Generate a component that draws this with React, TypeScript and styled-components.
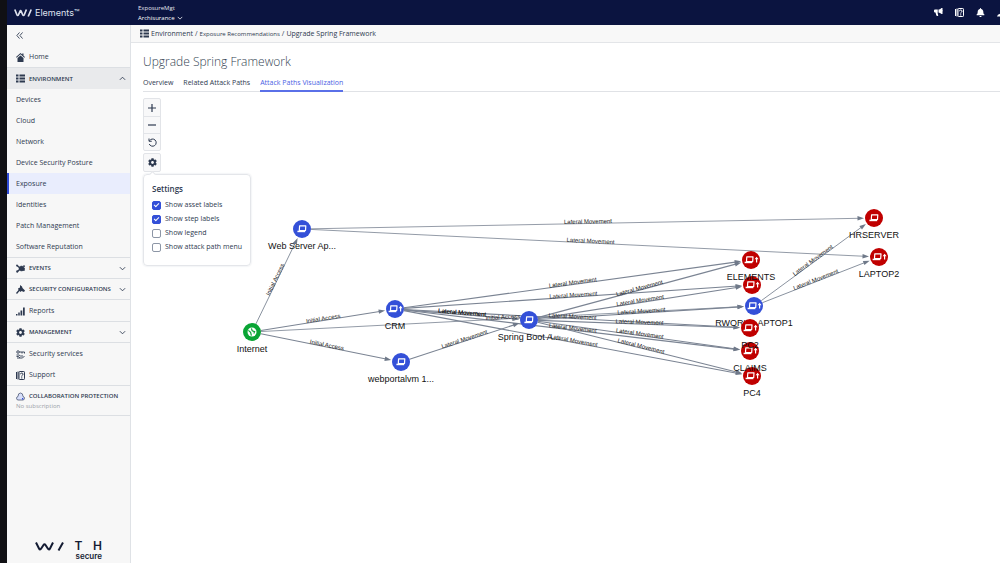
import React, { useState } from "react";
import styled, { createGlobalStyle } from "styled-components";
import { FaBell, FaCog } from "react-icons/fa";

const GlobalStyle = createGlobalStyle`
  *, *::before, *::after { box-sizing: border-box; }
  body {
    margin: 0;
    background: #101014;
    color: #2e3a50;
    font-family: "Open Sans", "Noto Sans", sans-serif;
    font-size: 7px;
    line-height: 10px;
  }
  button, input { font: inherit; color: inherit; margin: 0; }
  a { color: inherit; text-decoration: none; }
  svg { display: block; flex: none; }
`;

const Shell = styled.div`
  display: flex;
  flex-direction: column;
  min-height: 100vh;
  padding-left: 7px;
`;

const TopBar = styled.header`
  display: flex;
  align-items: center;
  height: 25px;
  flex: none;
  background: #0b1440;
  color: #ffffff;
`;

const Brand = styled.a`
  display: flex;
  align-items: center;
  gap: 3px;
  width: 131px;
  padding-left: 7px;
  font-family: Inter, sans-serif;
  font-size: 9px;
  color: #dfe2ee;
`;

const Account = styled.div`
  display: flex;
  flex-direction: column;
  padding-top: 1px;
  color: #e3e5ef;
  font-size: 6px;
`;

const AccountSwitch = styled.button`
  display: flex;
  align-items: center;
  gap: 2px;
  padding: 0;
  border: 0;
  background: none;
  color: #ffffff;
  font-weight: 500;
`;

const TopActions = styled.div`
  display: flex;
  align-items: center;
  gap: 12px;
  margin-left: auto;
`;

const IconButton = styled.button`
  display: flex;
  padding: 0;
  border: 0;
  background: none;
  color: #ffffff;
`;

const EdgeSlot = styled.span`
  width: 3px;
  overflow: hidden;
`;

const Body = styled.div`
  display: flex;
  flex: 1;
`;

const Sidebar = styled.nav`
  display: flex;
  flex-direction: column;
  width: 124px;
  flex: none;
  background: #f7f7f7;
  border-right: 1px solid #dfe2e6;
`;

const Collapse = styled.button`
  display: flex;
  align-items: center;
  height: 21px;
  padding: 0 9px;
  border: 0;
  background: none;
`;

const Group = styled.div`
  display: flex;
  flex-direction: column;
  border-bottom: 1px solid #dcdfe3;
`;

const NavLink = styled.a<{ $active?: boolean }>`
  display: flex;
  align-items: center;
  gap: 4px;
  height: 21px;
  padding: 1px 7px 0;
  border-left: 2px solid ${(p) => (p.$active ? "#2f4bd6" : "transparent")};
  background: ${(p) => (p.$active ? "#e9edfd" : "transparent")};
`;

const SectionButton = styled.button<{ $open?: boolean }>`
  display: flex;
  align-items: center;
  gap: 4px;
  height: ${(p) => (p.$open ? 21 : 20)}px;
  padding: 0 4px 0 9px;
  border: 0;
  background: ${(p) => (p.$open ? "#e9eaec" : "transparent")};
  font-size: 6px;
  font-weight: 600;
  text-align: left;
`;

const SectionLabel = styled.span`
  flex: 1;
  white-space: nowrap;
`;

const Collaboration = styled.div`
  display: flex;
  flex-direction: column;
  height: 30px;
  padding: 5px 0 0 9px;
  border-bottom: 1px solid #dcdfe3;
  color: #9a9fa8;
  font-size: 6px;
`;

const CollaborationTitle = styled.div`
  display: flex;
  align-items: center;
  gap: 4px;
  color: #2e3a50;
  font-weight: 600;
  white-space: nowrap;
`;

const FooterLogo = styled.div`
  display: flex;
  flex-direction: column;
  width: 67px;
  margin: auto 0 2px 28px;
  padding-top: 16px;
  color: #141c33;
  font-family: Inter, sans-serif;
  font-size: 8px;
  font-weight: 600;
  line-height: 10px;
  text-align: right;
`;

const Wordmark = styled.div`
  display: flex;
  align-items: center;
  justify-content: space-between;
  font-size: 12px;
  line-height: 10px;
`;

const Main = styled.main`
  display: flex;
  flex-direction: column;
  flex: 1;
  min-width: 0;
  background: #ffffff;
`;

const Breadcrumb = styled.nav`
  display: flex;
  align-items: center;
  gap: 2px;
  height: 18px;
  padding-left: 9px;
  border-bottom: 1px solid #e3e5e8;
  background: #f8f8f8;
  white-space: nowrap;
`;

const Crumb = styled.a<{ $small?: boolean }>`
  font-size: ${(p) => (p.$small ? 6 : 7)}px;
`;

const Title = styled.h1`
  margin: 0;
  padding: 10px 12px 1px;
  font-size: 12px;
  line-height: 18px;
  font-weight: 300;
  color: #333f52;
`;

const Tabs = styled.div`
  display: flex;
  gap: 10px;
  height: 20px;
  margin-left: 12px;
  border-bottom: 1px solid #e0e2e6;
`;

const Tab = styled.a<{ $active?: boolean }>`
  height: 20px;
  padding-top: 6px;
  border-bottom: 2px solid ${(p) => (p.$active ? "#5a70e8" : "transparent")};
  color: ${(p) => (p.$active ? "#4a62e4" : "inherit")};
`;

const Canvas = styled.section`
  position: relative;
  flex: 1;
`;

const Controls = styled.div`
  position: absolute;
  top: 6px;
  left: 12px;
  display: flex;
  flex-direction: column;
  gap: 2px;
`;

const ToolGroup = styled.div`
  display: flex;
  flex-direction: column;
  width: 18px;
  border: 1px solid #e2e4e8;
  border-radius: 2px;
  background: #f8f8f9;
`;

const ToolButton = styled.button`
  display: flex;
  align-items: center;
  justify-content: center;
  height: 17px;
  padding: 0;
  border: 0;
  background: none;
  & + & { border-top: 1px solid #e2e4e8; }
`;

const Settings = styled.fieldset`
  position: relative;
  display: flex;
  flex-direction: column;
  gap: 4px;
  width: 107px;
  margin: 0;
  padding: 9px 8px 13px;
  border: 1px solid #e4e6ea;
  border-radius: 4px;
  background: #ffffff;
  box-shadow: 0 0 2px #d9dce2;
  &::before {
    content: "";
    position: absolute;
    top: -3px;
    left: 6px;
    width: 5px;
    height: 5px;
    border: solid #e4e6ea;
    border-width: 1px 0 0 1px;
    background: #ffffff;
    transform: rotate(45deg);
  }
`;

const SettingsTitle = styled.h2`
  margin: 0 0 2px;
  font-size: 8px;
  line-height: 10px;
  font-weight: 600;
`;

const Option = styled.label`
  display: flex;
  align-items: center;
  gap: 4px;
  white-space: nowrap;
`;

const Checkbox = styled.input`
  appearance: none;
  width: 9px;
  height: 9px;
  border: 1px solid #8d96a6;
  border-radius: 2px;
  background: #ffffff;
  display: grid;
  place-items: center;
  &:checked { background: #3450d8; border-color: #3450d8; }
  &:checked::after {
    content: "";
    width: 3px;
    height: 5px;
    margin-bottom: 1px;
    border: solid #ffffff;
    border-width: 0 1px 1px 0;
    transform: rotate(45deg);
  }
`;

const Graph = styled.svg`
  width: 100%;
  height: auto;
  font-family: "Liberation Sans", Arial, sans-serif;
`;

const NodeLabel = styled.text`
  font-size: 9px;
  text-anchor: middle;
  fill: #111111;
`;

const StepLabel = styled.text`
  font-size: 6px;
  text-anchor: middle;
  fill: #1a1a1a;
`;

/* ---------- icons ---------- */

const Chevron = ({ up, size = 7 }: { up?: boolean; size?: number }) => (
  <svg width={size} height={size} viewBox="0 0 8 8" fill="none" stroke="currentColor" strokeWidth="1">
    <path d={up ? "M1 5.5 4 2.5 7 5.5" : "M1 2.5 4 5.5 7 2.5"} />
  </svg>
);

const WaveMark = ({ wide }: { wide?: boolean }) => (
  <svg
    width={wide ? 29 : 18}
    height={wide ? 9 : 8}
    viewBox={wide ? "0 0 29 9" : "0 0 18 8"}
    fill="none"
    stroke="currentColor"
    strokeWidth={wide ? 2 : 1.7}
  >
    <path
      d={
        wide
          ? "M1 .5 4 6.500Q5 8.500 6.200 6.500L8.500 3Q9.500 1.500 10.500 3L12.800 6.500Q14 8.500 15 6.500L18 .5M23.500 8.500 28 .5"
          : "M.8 .5 2.800 5.500Q3.700 7.500 4.600 5.500L6 2.300Q6.600 1 7.200 2.300L8.600 5.500Q9.500 7.500 10.400 5.500L12.400 .5M14.200 7.500 17.200 .5"
      }
    />
  </svg>
);

const BullhornIcon = () => (
  <svg width="9" height="9" viewBox="0 0 18 18" fill="currentColor">
    <path d="M15 0h2v4.500q1.500 1 0 2.500v5h-2q-3-3-6-3.200V3.200Q12 3 15 0zM2 3h5.500v6H7l1.500 6.500q-3 1.500-4-1L3 9H2Q0 9 0 7V5q0-2 2-2z" />
  </svg>
);

const HomeIcon = () => (
  <svg width="9" height="9" viewBox="0 0 18 18" fill="currentColor">
    <path d="M9 0 0 8l1.300 1.400L9 2.700l7.700 6.700L18 8l-3-2.700V1h-2.500v2.100zM3 10l6-5.200 6 5.200v8H3z" />
  </svg>
);

const ListIcon = ({ size = 9 }: { size?: number }) => (
  <svg width={size} height={size} viewBox="0 0 18 18" fill="currentColor">
    <path d="M0 1h5v4H0zM7 1h11v4H7zM0 7h5v4H0zM7 7h11v4H7zM0 13h5v4H0zM7 13h11v4H7z" />
  </svg>
);

const EventsIcon = () => (
  <svg width="9" height="9" viewBox="0 0 18 18" fill="currentColor" stroke="currentColor">
    <path d="M9 9 2 3M9 9 3 15" strokeWidth="2.500" />
    <circle cx="11" cy="9" r="5" />
    <circle cx="2" cy="3" r="1.500" />
    <circle cx="2.500" cy="15" r="1.800" />
    <circle cx="16" cy="4.500" r="1.500" />
    <path d="M14 8h3v5h-4z" />
  </svg>
);

const WrenchIcon = () => (
  <svg width="9" height="9" viewBox="0 0 18 18" fill="currentColor">
    <path d="M8 0l4 3 1 3 5 5-2 3-5-2-2 2-2-2-5 6-2-2 5-6-1-3 4-2z" />
  </svg>
);

const ReportsIcon = () => (
  <svg width="9" height="9" viewBox="0 0 18 18" fill="currentColor">
    <path d="M0 14h3v3H0zM4.500 11h3v6h-3zM9 7h3.500v10H9zM14 1h3.500v16H14z" />
  </svg>
);

const ServicesIcon = () => (
  <svg width="9" height="9" viewBox="0 0 18 18" fill="none" stroke="currentColor" strokeWidth="1.800">
    <circle cx="4" cy="4" r="2.500" />
    <path d="M6.500 4H17v3M12 4v3M1 10h5l3 2h5M2 16h11l4-4M1 13h4l3 3" />
  </svg>
);

const HelpBookIcon = () => (
  <svg width="9" height="9" viewBox="0 0 18 18" fill="none" stroke="currentColor" strokeWidth="2">
    <path d="M1 2v14M4 1v16" />
    <rect x="6" y="1" width="11" height="16" rx="1.500" />
    <path d="M9 6.500q0-2.500 2.500-2.500T14 6.500q0 1.500-2.500 3v1.700M11.500 12.500v2.500" />
  </svg>
);

const CloudIcon = () => (
  <svg width="9" height="9" viewBox="0 0 18 18" fill="#d7defa" stroke="#46526e" strokeWidth="1.500">
    <path d="M4 16q-3-.5-3-3.500T4 9q0-7 5-7t5 7q3 .5 3 3.500T14 16z" />
    <path d="M12 12v3h2.500v-3z" fill="#3450d8" stroke="none" />
  </svg>
);

/* ---------- navigation ---------- */

const environmentLinks = [
  "Devices",
  "Cloud",
  "Network",
  "Device Security Posture",
  "Exposure",
  "Identities",
  "Patch Management",
  "Software Reputation",
];

const Section = ({ label, icon, open }: { label: string; icon: React.ReactNode; open?: boolean }) => (
  <SectionButton $open={open} aria-expanded={!!open}>
    {icon}
    <SectionLabel>{label}</SectionLabel>
    <Chevron up={open} />
  </SectionButton>
);

const SideNav = () => (
  <Sidebar>
    <Collapse aria-label="Collapse menu">
      <svg width="7" height="7" viewBox="0 0 8 8" fill="none" stroke="currentColor" strokeWidth="1">
        <path d="M4 .5 1 4l3 3.500M7.500 .5l-3 3.500 3 3.500" />
      </svg>
    </Collapse>
    <Group>
      <NavLink href="#home"><HomeIcon />Home</NavLink>
    </Group>
    <Group>
      <Section label="ENVIRONMENT" icon={<ListIcon />} open />
      {environmentLinks.map((name) => (
        <NavLink key={name} href="#env" $active={name === "Exposure"}>{name}</NavLink>
      ))}
    </Group>
    <Group><Section label="EVENTS" icon={<EventsIcon />} /></Group>
    <Group><Section label="SECURITY CONFIGURATIONS" icon={<WrenchIcon />} /></Group>
    <Group><NavLink href="#reports"><ReportsIcon />Reports</NavLink></Group>
    <Group><Section label="MANAGEMENT" icon={<FaCog size={9} />} /></Group>
    <Group>
      <NavLink href="#services"><ServicesIcon />Security services</NavLink>
      <NavLink href="#support"><HelpBookIcon />Support</NavLink>
    </Group>
    <Collaboration>
      <CollaborationTitle><CloudIcon />COLLABORATION PROTECTION</CollaborationTitle>
      No subscription
    </Collaboration>
    <FooterLogo>
      <Wordmark>
        <WaveMark wide />
        <span>T</span>
        <span>H</span>
      </Wordmark>
      <span>secure</span>
    </FooterLogo>
  </Sidebar>
);

/* ---------- attack path graph ---------- */

type Kind = "asset" | "target" | "internet";
type GraphNode = { x: number; y: number; kind: Kind; label: string; up?: boolean };

const colors: Record<Kind, string> = { asset: "#3450d8", target: "#c00000", internet: "#0aa535" };

// Listed in paint order: later nodes cover the labels of earlier ones.
const nodes: Record<string, GraphNode> = {
  internet: { x: 252, y: 332, kind: "internet", label: "Internet" },
  web: { x: 302, y: 229, kind: "asset", label: "Web Server Ap..." },
  crm: { x: 395, y: 309, kind: "asset", label: "CRM", up: true },
  portal: { x: 401, y: 362, kind: "asset", label: "webportalvm 1..." },
  spring: { x: 529, y: 320, kind: "asset", label: "Spring Boot A..." },
  server: { x: 752, y: 285, kind: "target", label: "", up: true },
  elements: { x: 751, y: 260, kind: "target", label: "ELEMENTS", up: true },
  rwork: { x: 754, y: 306, kind: "asset", label: "RWORK-LAPTOP1", up: true },
  pc4: { x: 752, y: 376, kind: "target", label: "PC4", up: true },
  claims: { x: 750, y: 351, kind: "target", label: "CLAIMS", up: true },
  pc2: { x: 750, y: 328, kind: "target", label: "PC2", up: true },
  hr: { x: 874, y: 218, kind: "target", label: "HRSERVER" },
  laptop2: { x: 879, y: 257, kind: "target", label: "LAPTOP2", up: true },
};

const IA = "Initial Access";
const LM = "Lateral Movement";

const edges: [string, string, string, boolean?][] = [
  ["internet", "web", IA],
  ["internet", "crm", IA, true],
  ["internet", "rwork", IA],
  ["internet", "portal", IA, true],
  ["web", "hr", LM],
  ["web", "laptop2", LM],
  ["crm", "spring", LM, true],
  ["crm", "spring", LM],
  ["crm", "elements", LM, true],
  ["crm", "server", LM, true],
  ["crm", "pc2", LM, true],
  ["crm", "claims", LM, true],
  ["crm", "pc4", LM, true],
  ["portal", "spring", LM, true],
  ["spring", "elements", LM, true],
  ["spring", "server", LM, true],
  ["spring", "rwork", LM, true],
  ["spring", "pc2", LM, true],
  ["spring", "claims", LM, true],
  ["spring", "pc4", LM, true],
  ["rwork", "hr", LM],
  ["rwork", "laptop2", LM],
];

const RADIUS = 9;

const EdgeShape = ({ edge }: { edge: (typeof edges)[number] }) => {
  const a = nodes[edge[0]];
  const b = nodes[edge[1]];
  const length = Math.hypot(b.x - a.x, b.y - a.y);
  const angle = (Math.atan2(b.y - a.y, b.x - a.x) * 180) / Math.PI;
  const tip = length - RADIUS - 1;
  return (
    <g transform={`translate(${a.x} ${a.y}) rotate(${angle})`} stroke="#7b8493" fill="#6f7989">
      <path d={`M${RADIUS} 0H${tip - 4}`} strokeWidth={edge[3] ? 1.1 : 0.8} />
      <path d={`M${tip} 0l-6.500 -2.200v4.400z`} stroke="none" />
    </g>
  );
};

const EdgeText = ({ edge }: { edge: (typeof edges)[number] }) => {
  const a = nodes[edge[0]];
  const b = nodes[edge[1]];
  const angle = (Math.atan2(b.y - a.y, b.x - a.x) * 180) / Math.PI;
  return (
    <StepLabel transform={`translate(${(a.x + b.x) / 2} ${(a.y + b.y) / 2}) rotate(${angle})`}>{edge[2]}</StepLabel>
  );
};

const Laptop = () => (
  <g>
    <path d="M-2.400 -3.200H3.800L3.500 1.500H-2.700z" fill="none" stroke="#ffffff" strokeWidth="1.200" strokeLinejoin="round" />
    <path d="M-4.600 1.700H3.200V3.200H-4.600z" fill="#ffffff" />
  </g>
);

const NodeShape = ({ node, labels }: { node: GraphNode; labels: boolean }) => (
  <g transform={`translate(${node.x} ${node.y})`}>
    <circle r={RADIUS} fill={colors[node.kind]} />
    {node.kind === "internet" ? (
      <g>
        <circle r="4.500" fill="#ffffff" />
        <path d="M-3.600 -1.600-1.400 .4-.6 3.600M-.6 -3.600 .2 -1.200 2.600 -.4 1.800 1.400" fill="none" stroke={colors.internet} strokeWidth="1.200" />
      </g>
    ) : (
      <>
        <g transform={node.up ? "translate(-1.800 0)" : undefined}>
          <Laptop />
        </g>
        {node.up && <path d="M5.600 -3.200 7.600 -.8H6.200V2.400H5V-.8H3.600z" fill="#ffffff" />}
      </>
    )}
    {labels && node.label && <NodeLabel y="20">{node.label}</NodeLabel>}
  </g>
);

export default function App() {
  const [options, setOptions] = useState([
    { label: "Show asset labels", on: true },
    { label: "Show step labels", on: true },
    { label: "Show legend", on: false },
    { label: "Show attack path menu", on: false },
  ]);
  const toggle = (index: number) =>
    setOptions(options.map((o, i) => (i === index ? { ...o, on: !o.on } : o)));

  return (
    <>
      <GlobalStyle />
      <Shell>
        <TopBar>
          <Brand href="#top">
            <WaveMark />
            <span>Elements™</span>
          </Brand>
          <Account>
            <span>ExposureMgt</span>
            <AccountSwitch>Archisurance <Chevron size={6} /></AccountSwitch>
          </Account>
          <TopActions>
            <IconButton aria-label="Announcements"><BullhornIcon /></IconButton>
            <IconButton aria-label="Help"><HelpBookIcon /></IconButton>
            <IconButton aria-label="Notifications"><FaBell size={9} /></IconButton>
            <EdgeSlot>
              <svg width="9" height="9" viewBox="0 0 18 18" fill="currentColor">
                <circle cx="11" cy="5" r="4" />
                <path d="M0 17q1-6 9-6t9 6z" />
              </svg>
            </EdgeSlot>
          </TopActions>
        </TopBar>
        <Body>
          <SideNav />
          <Main>
            <Breadcrumb aria-label="Breadcrumb">
              <ListIcon />
              <Crumb href="#env">Environment</Crumb>
              <span>/</span>
              <Crumb href="#recommendations" $small>Exposure Recommendations</Crumb>
              <span>/</span>
              <Crumb href="#upgrade">Upgrade Spring Framework</Crumb>
            </Breadcrumb>
            <Title>Upgrade Spring Framework</Title>
            <Tabs>
              <Tab href="#overview">Overview</Tab>
              <Tab href="#related">Related Attack Paths</Tab>
              <Tab href="#visualization" $active>Attack Paths Visualization</Tab>
            </Tabs>
            <Canvas>
              <Graph viewBox="131 92 869 471" role="img" aria-label="Attack paths">
                {edges.map((e, i) => <EdgeShape key={i} edge={e} />)}
                {options[1].on && edges.map((e, i) => <EdgeText key={i} edge={e} />)}
                {Object.entries(nodes).map(([id, node]) => (
                  <NodeShape key={id} node={node} labels={options[0].on} />
                ))}
              </Graph>
              <Controls>
                <ToolGroup>
                  <ToolButton aria-label="Zoom in">
                    <svg width="8" height="8" viewBox="0 0 8 8" stroke="currentColor" strokeWidth="1.200"><path d="M0 4H8M4 0V8" /></svg>
                  </ToolButton>
                  <ToolButton aria-label="Zoom out">
                    <svg width="8" height="8" viewBox="0 0 8 8" stroke="currentColor" strokeWidth="1.200"><path d="M0 4H8" /></svg>
                  </ToolButton>
                  <ToolButton aria-label="Reset view">
                    <svg width="9" height="9" viewBox="0 0 18 18" fill="none" stroke="currentColor" strokeWidth="2">
                      <path d="M3 5.500A7.200 7.200 0 1 1 2.500 12M2 1v5.500h5.500" />
                    </svg>
                  </ToolButton>
                </ToolGroup>
                <ToolGroup>
                  <ToolButton aria-label="Settings"><FaCog size={9} /></ToolButton>
                </ToolGroup>
                <Settings>
                  <SettingsTitle>Settings</SettingsTitle>
                  {options.map((o, i) => (
                    <Option key={o.label}>
                      <Checkbox type="checkbox" checked={o.on} onChange={() => toggle(i)} />
                      {o.label}
                    </Option>
                  ))}
                </Settings>
              </Controls>
            </Canvas>
          </Main>
        </Body>
      </Shell>
    </>
  );
}
